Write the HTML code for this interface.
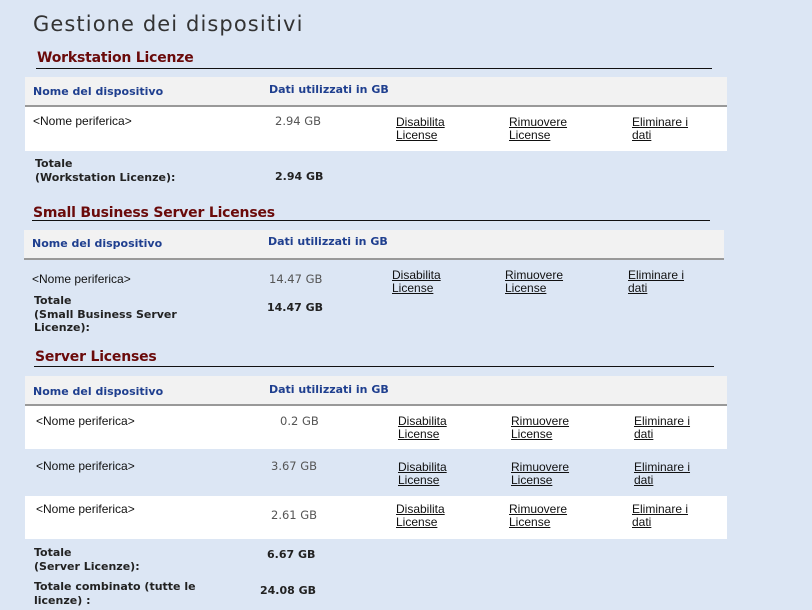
<!DOCTYPE html>
<html><head><meta charset="utf-8"><style>
body{margin:0;width:812px;height:610px;background:#dce6f4;position:relative;overflow:hidden;font-family:"Liberation Sans",sans-serif;}
div{position:absolute;}
.t{left:33px;top:12px;font-size:21px;letter-spacing:1.1px;color:#333;font-family:"DejaVu Sans",sans-serif;}
.h{font-family:"DejaVu Sans",sans-serif;font-weight:bold;font-size:14px;color:#6a0a0a;letter-spacing:-0.2px;}
.ln{height:1px;background:#111;}
.hd{background:#f2f2f2;border-bottom:2px solid #999;}
.b{font-family:"DejaVu Sans",sans-serif;font-weight:bold;font-size:11px;color:#1f3f8f;}
.w{background:#fff;}
.n{font-size:12px;color:#111;}
.g{font-size:11.5px;color:#555;font-family:"DejaVu Sans",sans-serif;}
.a{font-size:12px;color:#111;text-decoration:underline;line-height:13px;}
.k{font-family:"DejaVu Sans",sans-serif;font-weight:bold;font-size:11px;color:#222;line-height:13.5px;}
</style></head><body>
<div class="t">Gestione dei dispositivi</div>

<div class="h" style="left:37px;top:50px">Workstation Licenze</div>
<div class="ln" style="left:36px;top:68px;width:676px"></div>
<div class="hd" style="left:25px;top:77px;width:702px;height:28px"></div>
<div class="b" style="left:33px;top:85px">Nome del dispositivo</div>
<div class="b" style="left:269px;top:83px">Dati utilizzati in GB</div>
<div class="w" style="left:25px;top:107px;width:702px;height:44px"></div>
<div class="n" style="left:33px;top:114px">&lt;Nome periferica&gt;</div>
<div class="g" style="left:275px;top:114px">2.94 GB</div>
<div class="a" style="left:396px;top:116px">Disabilita<br>License</div>
<div class="a" style="left:509px;top:116px">Rimuovere<br>License</div>
<div class="a" style="left:632px;top:116px">Eliminare i<br>dati</div>
<div class="k" style="left:35px;top:157px">Totale<br>(Workstation Licenze):</div>
<div class="k" style="left:275px;top:170px">2.94 GB</div>

<div class="h" style="left:33px;top:205px">Small Business Server Licenses</div>
<div class="ln" style="left:32px;top:220px;width:678px"></div>
<div class="hd" style="left:24px;top:230px;width:700px;height:28px"></div>
<div class="b" style="left:32px;top:237px">Nome del dispositivo</div>
<div class="b" style="left:268px;top:235px">Dati utilizzati in GB</div>
<div class="n" style="left:32px;top:272px">&lt;Nome periferica&gt;</div>
<div class="g" style="left:269px;top:272px">14.47 GB</div>
<div class="a" style="left:392px;top:269px">Disabilita<br>License</div>
<div class="a" style="left:505px;top:269px">Rimuovere<br>License</div>
<div class="a" style="left:628px;top:269px">Eliminare i<br>dati</div>
<div class="k" style="left:34px;top:294px">Totale<br>(Small Business Server<br>Licenze):</div>
<div class="k" style="left:267px;top:301px">14.47 GB</div>

<div class="h" style="left:35px;top:349px">Server Licenses</div>
<div class="ln" style="left:34px;top:366px;width:680px"></div>
<div class="hd" style="left:25px;top:376px;width:702px;height:28px"></div>
<div class="b" style="left:33px;top:385px">Nome del dispositivo</div>
<div class="b" style="left:269px;top:383px">Dati utilizzati in GB</div>
<div class="w" style="left:25px;top:406px;width:702px;height:43px"></div>
<div class="w" style="left:25px;top:496px;width:702px;height:43px"></div>
<div class="n" style="left:36px;top:414px">&lt;Nome periferica&gt;</div>
<div class="g" style="left:280px;top:414px">0.2 GB</div>
<div class="a" style="left:398px;top:415px">Disabilita<br>License</div>
<div class="a" style="left:511px;top:415px">Rimuovere<br>License</div>
<div class="a" style="left:634px;top:415px">Eliminare i<br>dati</div>
<div class="n" style="left:36px;top:459px">&lt;Nome periferica&gt;</div>
<div class="g" style="left:271px;top:459px">3.67 GB</div>
<div class="a" style="left:398px;top:461px">Disabilita<br>License</div>
<div class="a" style="left:511px;top:461px">Rimuovere<br>License</div>
<div class="a" style="left:634px;top:461px">Eliminare i<br>dati</div>
<div class="n" style="left:36px;top:502px">&lt;Nome periferica&gt;</div>
<div class="g" style="left:271px;top:508px">2.61 GB</div>
<div class="a" style="left:396px;top:503px">Disabilita<br>License</div>
<div class="a" style="left:509px;top:503px">Rimuovere<br>License</div>
<div class="a" style="left:632px;top:503px">Eliminare i<br>dati</div>
<div class="k" style="left:34px;top:546px">Totale<br>(Server Licenze):</div>
<div class="k" style="left:267px;top:548px">6.67 GB</div>
<div class="k" style="left:34px;top:580px">Totale combinato (tutte le<br>licenze) :</div>
<div class="k" style="left:260px;top:584px">24.08 GB</div>
</body></html>
